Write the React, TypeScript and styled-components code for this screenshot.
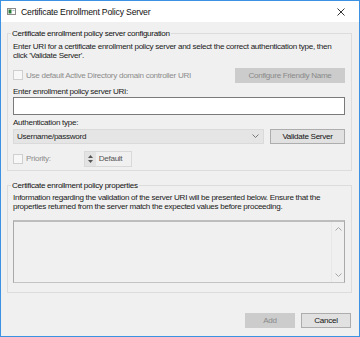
import styled, { createGlobalStyle } from "styled-components";

const GlobalStyle = createGlobalStyle`
  html, body {
    margin: 0;
    padding: 0;
    background: #f0f0f0;
  }
  * {
    box-sizing: border-box;
  }
`;

const Window = styled.div`
  width: 360px;
  height: 337px;
  border: 1px solid #3c91e2;
  background: #f0f0f0;
  display: flex;
  flex-direction: column;
  font-family: "Liberation Sans", Arial, sans-serif;
  font-size: 8.1px;
  letter-spacing: -0.3px;
  color: #1a1a1a;
`;

const TitleBar = styled.div`
  height: 21px;
  background: #fff;
  display: flex;
  align-items: center;
  padding: 0 14px 0 6px;
  gap: 5px;
  font-size: 8.7px;
  letter-spacing: -0.2px;
  color: #111;
`;

const TitleText = styled.span`
  flex: 1;
`;

const Body = styled.div`
  flex: 1;
  display: flex;
  flex-direction: column;
  padding: 7px 7px 8px 6px;
`;

const Group = styled.fieldset<{ $height?: number }>`
  margin: 0;
  height: ${({ $height }) => ($height ? `${$height}px` : "auto")};
  border: 1px solid #dcdcdc;
  padding: 0 6px 9px 5px;
  display: flex;
  flex-direction: column;
  & + & {
    margin-top: 10px;
  }
`;

const Legend = styled.legend`
  padding: 0 1px;
  margin-left: -2px;
  line-height: 9.5px;
  color: #111;
`;

const Para = styled.div<{ $top: number }>`
  line-height: 9.5px;
  margin-top: ${({ $top }) => $top}px;
  white-space: nowrap;
`;

const Row = styled.div<{ $top: number }>`
  display: flex;
  align-items: center;
  margin-top: ${({ $top }) => $top}px;
`;

const Check = styled.span`
  width: 10px;
  height: 10px;
  border: 1px solid #cfcfcf;
  background: #f7f7f7;
  flex: none;
`;

const CheckLabel = styled.span<{ $grow?: boolean }>`
  margin-left: 3px;
  color: #8c8c8c;
  flex: ${({ $grow }) => ($grow ? 1 : "none")};
`;

const Button = styled.div<{ $disabled?: boolean; $width: number }>`
  width: ${({ $width }) => $width}px;
  height: 15px;
  display: flex;
  align-items: center;
  justify-content: center;
  border: 1px solid ${({ $disabled }) => ($disabled ? "#cccccc" : "#adadad")};
  background: ${({ $disabled }) => ($disabled ? "#cccccc" : "#e1e1e1")};
  color: ${({ $disabled }) => ($disabled ? "#8a8a8a" : "#111")};
  flex: none;
`;

const Label = styled.div<{ $top: number }>`
  line-height: 9.5px;
  margin-top: ${({ $top }) => $top}px;
`;

const TextInput = styled.div`
  margin-top: 1px;
  height: 18px;
  background: #fff;
  border: 1px solid #7a7a7a;
`;

const Select = styled.div`
  flex: 1;
  height: 15px;
  background: #e5e5e5;
  border: 1px solid #dadada;
  display: flex;
  align-items: center;
  padding: 0 4px 0 3px;
  margin-right: 6px;
`;

const SelectValue = styled.span`
  flex: 1;
`;

const Spinner = styled.div`
  margin-left: 33px;
  width: 48px;
  height: 16px;
  border: 1px solid #d9d9d9;
  display: flex;
  align-items: center;
`;

const SpinArrows = styled.div`
  width: 11px;
  height: 100%;
  background: #e3e3e3;
  display: flex;
  flex-direction: column;
  align-items: center;
  justify-content: center;
  gap: 2px;
`;

const SpinValue = styled.span`
  margin-left: 3px;
  color: #555;
`;

const Box = styled.div`
  margin-top: 8px;
  height: 63px;
  border: 1px solid #a9a9a9;
  border-top: 2px solid #bdbdbd;
  border-bottom-color: #c4c4c4;
  display: flex;
  justify-content: flex-end;
`;

const ScrollBar = styled.div`
  width: 13px;
  display: flex;
  flex-direction: column;
  justify-content: space-between;
  align-items: center;
  padding: 5px 0;
  border-left: 1px solid #e8e8e8;
`;

const Footer = styled.div`
  margin-top: auto;
  display: flex;
  justify-content: flex-end;
  gap: 6px;
  padding-right: 1px;
`;

function Chevron({ up, color = "#777" }: { up?: boolean; color?: string }) {
  return (
    <svg width="7" height="4" viewBox="0 0 7 4">
      <path
        d={up ? "M0.5 3.5 L3.5 0.5 L6.5 3.5" : "M0.5 0.5 L3.5 3.5 L6.5 0.5"}
        fill="none"
        stroke={color}
        strokeWidth="1"
      />
    </svg>
  );
}

function Tri({ up }: { up?: boolean }) {
  return (
    <svg width="5" height="3" viewBox="0 0 5 3">
      <path d={up ? "M0 3 L2.5 0 L5 3 Z" : "M0 0 L2.5 3 L5 0 Z"} fill="#555" />
    </svg>
  );
}

function AppIcon() {
  return (
    <svg width="9" height="7" viewBox="0 0 9 7">
      <rect x="0.5" y="0.5" width="8" height="6" fill="#fff" stroke="#8a8a8a" />
      <rect x="1.5" y="1.5" width="3" height="4" fill="#2c7a3b" />
      <rect x="5.5" y="2" width="2" height="1" fill="#9fb6c9" />
    </svg>
  );
}

function Close() {
  return (
    <svg width="8" height="8" viewBox="0 0 8 8">
      <path d="M0.5 0.5 L7.5 7.5 M7.5 0.5 L0.5 7.5" stroke="#333" strokeWidth="1" />
    </svg>
  );
}

export default function App() {
  return (
    <>
      <GlobalStyle />
      <Window>
        <TitleBar>
          <AppIcon />
          <TitleText>Certificate Enrollment Policy Server</TitleText>
          <Close />
        </TitleBar>
        <Body>
          <Group $height={142}>
            <Legend>Certificate enrollment policy server configuration</Legend>
            <Para $top={3}>
              Enter URI for a certificate enrollment policy server and select the correct
              authentication type, then
              <br />
              click 'Validate Server'.
            </Para>
            <Row $top={7}>
              <Check />
              <CheckLabel $grow>Use default Active Directory domain controller URI</CheckLabel>
              <Button $disabled $width={110}>Configure Friendly Name</Button>
            </Row>
            <Label $top={4}>Enter enrollment policy server URI:</Label>
            <TextInput />
            <Label $top={3}>Authentication type:</Label>
            <Row $top={1}>
              <Select>
                <SelectValue>Username/password</SelectValue>
                <Chevron />
              </Select>
              <Button $width={75}>Validate Server</Button>
            </Row>
            <Row $top={7}>
              <Check />
              <CheckLabel>Priority:</CheckLabel>
              <Spinner>
                <SpinArrows>
                  <Tri up />
                  <Tri />
                </SpinArrows>
                <SpinValue>Default</SpinValue>
              </Spinner>
            </Row>
          </Group>
          <Group>
            <Legend>Certificate enrollment policy properties</Legend>
            <Para $top={2}>
              Information regarding the validation of the server URI will be presented below.
              Ensure that the
              <br />
              properties returned from the server match the expected values before proceeding.
            </Para>
            <Box>
              <ScrollBar>
                <Chevron up color="#a8a8a8" />
                <Chevron color="#a8a8a8" />
              </ScrollBar>
            </Box>
          </Group>
          <Footer>
            <Button $disabled $width={50}>Add</Button>
            <Button $width={50}>Cancel</Button>
          </Footer>
        </Body>
      </Window>
    </>
  );
}
